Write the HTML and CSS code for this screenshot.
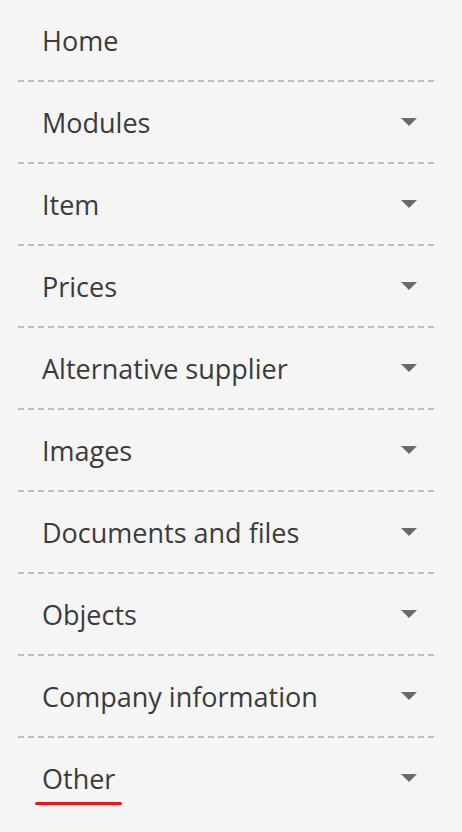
FILE: index.html
```html
<!DOCTYPE html>
<html lang="en">
<head>
  <meta charset="UTF-8">
  <meta name="viewport" content="width=device-width, initial-scale=1.0">
  <title>Menu</title>
  <link rel="stylesheet" href="styles.css">
</head>
<body>
  <!-- Menu lateral -->
  <nav class="menu">
    <a class="menu-item" href="#">Home</a>
    <a class="menu-item" href="#">Modules <span class="seta"></span></a>
    <a class="menu-item" href="#">Item <span class="seta"></span></a>
    <a class="menu-item" href="#">Prices <span class="seta"></span></a>
    <a class="menu-item" href="#">Alternative supplier <span class="seta"></span></a>
    <a class="menu-item" href="#">Images <span class="seta"></span></a>
    <a class="menu-item" href="#">Documents and files <span class="seta"></span></a>
    <a class="menu-item" href="#">Objects <span class="seta"></span></a>
    <a class="menu-item" href="#">Company information <span class="seta"></span></a>
    <a class="menu-item ultimo" href="#"><span class="ativo">Other</span> <span class="seta"></span></a>
  </nav>
</body>
</html>
```

FILE: styles.css
```css
body {
  margin: 0;
  padding: 0;
  background: #f5f5f5;
  font-family: "Open Sans", "Noto Sans", sans-serif;
  height: 100vh;
  overflow: hidden;
}

.menu {
  display: flex;
  flex-direction: column;
  margin: 0 28px 0 18px;
}

.menu-item {
  display: flex;
  align-items: center;
  justify-content: space-between;
  height: 80px;
  padding: 0 17px 0 24px;
  border-bottom: 2px dashed #bdbdbd;
  color: #3b3b3b;
  font-size: 27px;
  text-decoration: none;
}

.menu-item.ultimo {
  border-bottom: none;
}

/* Setinha do dropdown */
.seta {
  width: 0;
  height: 0;
  border-left: 8px solid transparent;
  border-right: 8px solid transparent;
  border-top: 8px solid #6a6a6a;
}

/* Item ativo com sublinhado vermelho */
.ativo {
  position: relative;
}

.ativo::after {
  content: "";
  position: absolute;
  left: -7px;
  right: -7px;
  bottom: -8px;
  height: 3px;
  border-radius: 2px;
  background: #ff1010;
}
```
